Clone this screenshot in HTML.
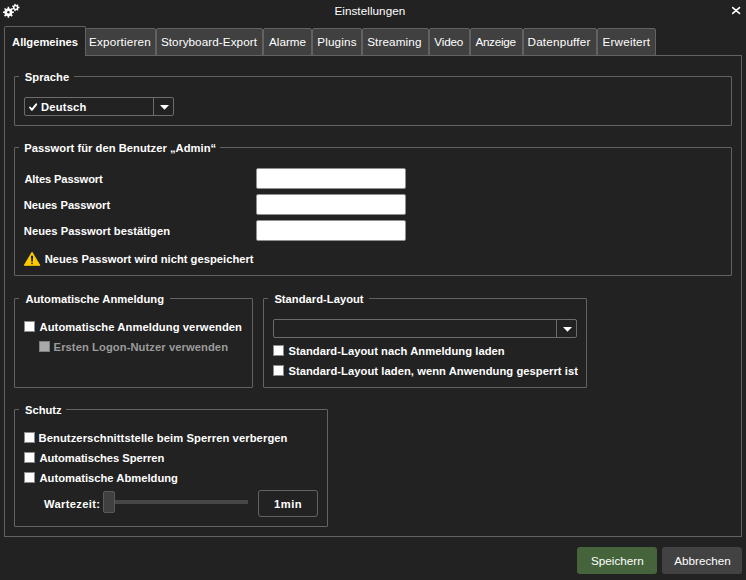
<!DOCTYPE html>
<html><head><meta charset="utf-8"><style>
html,body{margin:0;padding:0;}
body{width:746px;height:580px;overflow:hidden;background:#222222;position:relative;font-family:"Liberation Sans",sans-serif;}
.b{position:absolute;box-sizing:border-box;}
.t{position:absolute;white-space:nowrap;line-height:1;font-family:"Liberation Sans",sans-serif;}
</style></head><body>
<div class="b" style="left:4px;top:55px;width:738px;height:482px;border:1px solid #636363;border-radius:0"></div>
<div class="b" style="left:85px;top:28px;width:71px;height:28px;background:#404040;border:1px solid #626262;border-radius:2px 2px 0 0"></div>
<div class="b" style="left:156px;top:28px;width:107px;height:28px;background:#404040;border:1px solid #626262;border-radius:2px 2px 0 0"></div>
<div class="b" style="left:263px;top:28px;width:49px;height:28px;background:#404040;border:1px solid #626262;border-radius:2px 2px 0 0"></div>
<div class="b" style="left:312px;top:28px;width:50px;height:28px;background:#404040;border:1px solid #626262;border-radius:2px 2px 0 0"></div>
<div class="b" style="left:362px;top:28px;width:67px;height:28px;background:#404040;border:1px solid #626262;border-radius:2px 2px 0 0"></div>
<div class="b" style="left:429px;top:28px;width:41px;height:28px;background:#404040;border:1px solid #626262;border-radius:2px 2px 0 0"></div>
<div class="b" style="left:470px;top:28px;width:53px;height:28px;background:#404040;border:1px solid #626262;border-radius:2px 2px 0 0"></div>
<div class="b" style="left:523px;top:28px;width:74px;height:28px;background:#404040;border:1px solid #626262;border-radius:2px 2px 0 0"></div>
<div class="b" style="left:597px;top:28px;width:59px;height:28px;background:#404040;border:1px solid #626262;border-radius:2px 2px 0 0"></div>
<div class="b" style="left:4px;top:26px;width:82px;height:30px;background:#222222;border:1px solid #626262;border-bottom:none;border-radius:2px 2px 0 0"></div>
<div class="b" style="left:14px;top:76px;width:718px;height:50px;border:1px solid #636363;border-radius:1px"></div>
<div class="b" style="left:19px;top:76px;width:55px;height:1px;background:#222222"></div>
<div class="b" style="left:14px;top:147px;width:718px;height:129px;border:1px solid #636363;border-radius:1px"></div>
<div class="b" style="left:19px;top:147px;width:201px;height:1px;background:#222222"></div>
<div class="b" style="left:14px;top:298px;width:239px;height:90px;border:1px solid #636363;border-radius:1px"></div>
<div class="b" style="left:19px;top:298px;width:151px;height:1px;background:#222222"></div>
<div class="b" style="left:263px;top:298px;width:324px;height:90px;border:1px solid #636363;border-radius:1px"></div>
<div class="b" style="left:268px;top:298px;width:101px;height:1px;background:#222222"></div>
<div class="b" style="left:14px;top:409px;width:314px;height:118px;border:1px solid #636363;border-radius:1px"></div>
<div class="b" style="left:19px;top:409px;width:47px;height:1px;background:#222222"></div>
<div class="b" style="left:24px;top:97px;width:150px;height:19px;border:1px solid #6c6c6c;border-radius:2px"></div>
<div class="b" style="left:153px;top:97px;width:1px;height:19px;background:#6c6c6c"></div>
<svg class="b" style="left:160px;top:105px" width="9" height="5" viewBox="0 0 9 5"><path d="M0 0H9L4.5 4.8Z" fill="#fff"/></svg>
<div class="b" style="left:273px;top:319px;width:304px;height:19px;border:1px solid #6c6c6c;border-radius:2px"></div>
<div class="b" style="left:556px;top:319px;width:1px;height:19px;background:#6c6c6c"></div>
<svg class="b" style="left:563px;top:327px" width="9" height="5" viewBox="0 0 9 5"><path d="M0 0H9L4.5 4.8Z" fill="#fff"/></svg>
<svg class="b" style="left:27px;top:101px" width="12" height="12" viewBox="0 0 12 12"><path d="M3 6.5L4.9 8.8L9.2 3.3" stroke="#fff" stroke-width="1.9" fill="none" stroke-linecap="round" stroke-linejoin="round"/></svg>
<div class="b" style="left:256px;top:168px;width:150px;height:21px;background:#fff;border:1px solid #909090;border-radius:2px"></div>
<div class="b" style="left:256px;top:194px;width:150px;height:21px;background:#fff;border:1px solid #909090;border-radius:2px"></div>
<div class="b" style="left:256px;top:220px;width:150px;height:21px;background:#fff;border:1px solid #909090;border-radius:2px"></div>
<svg class="b" style="left:23px;top:251px" width="18" height="16" viewBox="0 0 18 16"><path d="M9.06 1.7L16.5 14.2H1.6Z" fill="#fdcb00" stroke="#fdcb00" stroke-width="1.3" stroke-linejoin="round"/><path d="M7.95 4.8H10.15L9.75 10.7H8.35Z" fill="#1c1c1c"/><circle cx="9.05" cy="12.3" r="0.9" fill="#222"/></svg>
<div class="b" style="left:24px;top:321px;width:11px;height:11px;background:#ffffff;border:1px solid #8a8a8a"></div>
<div class="b" style="left:39px;top:341px;width:11px;height:11px;background:#a9a9a9;border:1px solid #808080"></div>
<div class="b" style="left:273px;top:345px;width:11px;height:11px;background:#ffffff;border:1px solid #8a8a8a"></div>
<div class="b" style="left:273px;top:365px;width:11px;height:11px;background:#ffffff;border:1px solid #8a8a8a"></div>
<div class="b" style="left:24px;top:432px;width:11px;height:11px;background:#ffffff;border:1px solid #8a8a8a"></div>
<div class="b" style="left:24px;top:452px;width:11px;height:11px;background:#ffffff;border:1px solid #8a8a8a"></div>
<div class="b" style="left:24px;top:472px;width:11px;height:11px;background:#ffffff;border:1px solid #8a8a8a"></div>
<div class="b" style="left:104px;top:500px;width:144px;height:4px;background:#474747"></div>
<div class="b" style="left:103px;top:491px;width:12px;height:22px;background:#404040;border:1px solid #5a5a5a;border-radius:2px"></div>
<div class="b" style="left:258px;top:490px;width:60px;height:27px;border:1px solid #636363;border-radius:3px"></div>
<div class="b" style="left:577px;top:547px;width:80px;height:27px;background:#45643b;border-radius:3px"></div>
<div class="b" style="left:662px;top:547px;width:80px;height:27px;background:#424242;border-radius:3px"></div>
<svg class="b" style="left:0px;top:0px" width="26" height="22" viewBox="0 0 26 22">
<path fill="#fff" fill-rule="evenodd" d="M12.42 11.50 L13.85 11.55 L13.85 13.05 L12.42 13.10 L11.81 14.58 L12.79 15.62 L11.72 16.69 L10.68 15.71 L9.20 16.32 L9.15 17.75 L7.65 17.75 L7.60 16.32 L6.12 15.71 L5.08 16.69 L4.01 15.62 L4.99 14.58 L4.38 13.10 L2.95 13.05 L2.95 11.55 L4.38 11.50 L4.99 10.02 L4.01 8.98 L5.08 7.91 L6.12 8.89 L7.60 8.28 L7.65 6.85 L9.15 6.85 L9.20 8.28 L10.68 8.89 L11.72 7.91 L12.79 8.98 L11.81 10.02Z M9.70 12.30 A1.3 1.3 0 1 0 7.10 12.30 A1.3 1.3 0 1 0 9.70 12.30Z"/>
<path fill="#fff" fill-rule="evenodd" d="M18.42 6.82 L19.44 6.85 L19.44 8.15 L18.42 8.18 L17.93 9.20 L18.54 10.02 L17.52 10.83 L16.86 10.05 L15.76 10.30 L15.50 11.29 L14.23 11.00 L14.43 9.99 L13.55 9.29 L12.61 9.71 L12.04 8.54 L12.96 8.06 L12.96 6.94 L12.04 6.46 L12.61 5.29 L13.55 5.71 L14.43 5.01 L14.23 4.00 L15.50 3.71 L15.76 4.70 L16.86 4.95 L17.52 4.17 L18.54 4.98 L17.93 5.80Z M16.90 7.50 A1.2 1.2 0 1 0 14.50 7.50 A1.2 1.2 0 1 0 16.90 7.50Z"/>
</svg>
<svg class="b" style="left:731px;top:6px" width="11" height="10" viewBox="0 0 11 10"><path d="M1.7 1.6L8.5 7.4M8.5 1.6L1.7 7.4" stroke="#fff" stroke-width="1.6" stroke-linecap="round"/></svg>
<div class="t" style="left:334.40px;top:5.00px;font-size:11.7px;letter-spacing:0.058px;color:#ffffff">Einstellungen</div>
<div class="t" style="left:12.10px;top:37.00px;font-size:11.2px;font-weight:bold;letter-spacing:-0.010px;color:#ffffff">Allgemeines</div>
<div class="t" style="left:89.10px;top:36.00px;font-size:11.7px;letter-spacing:0.190px;color:#ffffff">Exportieren</div>
<div class="t" style="left:160.90px;top:36.00px;font-size:11.7px;letter-spacing:0.075px;color:#ffffff">Storyboard-Export</div>
<div class="t" style="left:269.00px;top:36.00px;font-size:11.7px;letter-spacing:0.020px;color:#ffffff">Alarme</div>
<div class="t" style="left:317.20px;top:36.00px;font-size:11.7px;letter-spacing:0.167px;color:#ffffff">Plugins</div>
<div class="t" style="left:367.20px;top:36.00px;font-size:11.7px;letter-spacing:0.125px;color:#ffffff">Streaming</div>
<div class="t" style="left:434.30px;top:36.00px;font-size:11.7px;letter-spacing:-0.175px;color:#ffffff">Video</div>
<div class="t" style="left:475.40px;top:36.00px;font-size:11.7px;letter-spacing:-0.283px;color:#ffffff">Anzeige</div>
<div class="t" style="left:527.50px;top:36.00px;font-size:11.7px;letter-spacing:0.200px;color:#ffffff">Datenpuffer</div>
<div class="t" style="left:602.50px;top:36.00px;font-size:11.7px;letter-spacing:0.188px;color:#ffffff">Erweitert</div>
<div class="t" style="left:24.80px;top:72.00px;font-size:11.2px;font-weight:bold;letter-spacing:0.033px;color:#ffffff">Sprache</div>
<div class="t" style="left:41.00px;top:102.00px;font-size:11.2px;font-weight:bold;letter-spacing:0.200px;color:#ffffff">Deutsch</div>
<div class="t" style="left:24.30px;top:143.00px;font-size:11.2px;font-weight:bold;letter-spacing:0.031px;color:#ffffff">Passwort für den Benutzer „Admin“</div>
<div class="t" style="left:24.40px;top:174.00px;font-size:11.2px;font-weight:bold;letter-spacing:-0.138px;color:#ffffff">Altes Passwort</div>
<div class="t" style="left:23.80px;top:200.00px;font-size:11.2px;font-weight:bold;letter-spacing:-0.008px;color:#ffffff">Neues Passwort</div>
<div class="t" style="left:23.80px;top:226.00px;font-size:11.2px;font-weight:bold;letter-spacing:0.033px;color:#ffffff">Neues Passwort bestätigen</div>
<div class="t" style="left:44.70px;top:254.00px;font-size:11.2px;font-weight:bold;letter-spacing:0.017px;color:#ffffff">Neues Passwort wird nicht gespeichert</div>
<div class="t" style="left:25.40px;top:294.00px;font-size:11.2px;font-weight:bold;letter-spacing:0.019px;color:#ffffff">Automatische Anmeldung</div>
<div class="t" style="left:39.50px;top:322.00px;font-size:11.2px;font-weight:bold;letter-spacing:0.087px;color:#ffffff">Automatische Anmeldung verwenden</div>
<div class="t" style="left:53.60px;top:342.00px;font-size:11.2px;font-weight:bold;letter-spacing:0.079px;color:#9b9b9b">Ersten Logon-Nutzer verwenden</div>
<div class="t" style="left:274.40px;top:294.00px;font-size:11.2px;font-weight:bold;letter-spacing:0.021px;color:#ffffff">Standard-Layout</div>
<div class="t" style="left:288.40px;top:346.00px;font-size:11.2px;font-weight:bold;letter-spacing:0.046px;color:#ffffff">Standard-Layout nach Anmeldung laden</div>
<div class="t" style="left:288.40px;top:366.00px;font-size:11.2px;font-weight:bold;letter-spacing:0.057px;color:#ffffff">Standard-Layout laden, wenn Anwendung gesperrt ist</div>
<div class="t" style="left:25.00px;top:405.00px;font-size:11.2px;font-weight:bold;letter-spacing:-0.020px;color:#ffffff">Schutz</div>
<div class="t" style="left:38.50px;top:433.00px;font-size:11.2px;font-weight:bold;letter-spacing:0.093px;color:#ffffff">Benutzerschnittstelle beim Sperren verbergen</div>
<div class="t" style="left:39.50px;top:453.00px;font-size:11.2px;font-weight:bold;letter-spacing:-0.035px;color:#ffffff">Automatisches Sperren</div>
<div class="t" style="left:39.50px;top:473.00px;font-size:11.2px;font-weight:bold;letter-spacing:0.010px;color:#ffffff">Automatische Abmeldung</div>
<div class="t" style="left:44.10px;top:499.00px;font-size:11.2px;font-weight:bold;letter-spacing:0.322px;color:#ffffff">Wartezeit:</div>
<div class="t" style="left:274.00px;top:499.00px;font-size:11.2px;font-weight:bold;letter-spacing:0.500px;color:#ffffff">1min</div>
<div class="t" style="left:591.00px;top:555.00px;font-size:11.7px;letter-spacing:0.000px;color:#ffffff">Speichern</div>
<div class="t" style="left:674.20px;top:555.00px;font-size:11.7px;letter-spacing:0.012px;color:#ffffff">Abbrechen</div>
</body></html>
